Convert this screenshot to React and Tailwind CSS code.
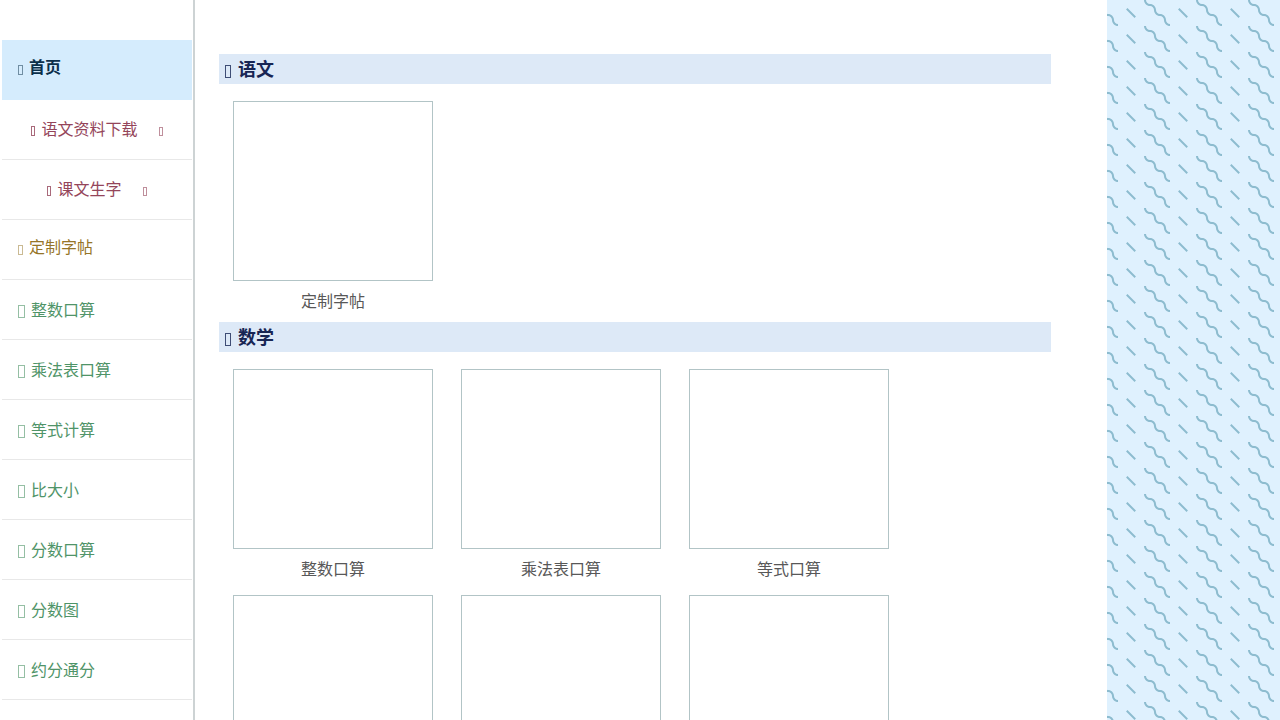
const menu = [
  { label: '首页', kind: 'active' },
  { label: '语文资料下载', kind: 'group' },
  { label: '课文生字', kind: 'group' },
  { label: '定制字帖', kind: 'gold' },
  { label: '整数口算' },
  { label: '乘法表口算' },
  { label: '等式计算' },
  { label: '比大小' },
  { label: '分数口算' },
  { label: '分数图' },
  { label: '约分通分' },
];

const sections = [
  { title: '语文', items: ['定制字帖'] },
  { title: '数学', items: ['整数口算', '乘法表口算', '等式口算', '比大小', '分数口算', '分数图'] },
];

// narrow outlined box used as the icon everywhere
const Icon = ({ className }) => (
  <span aria-hidden="true" className={`inline-block shrink-0 border border-current ${className}`} />
);

function MenuItem({ label, kind }) {
  if (kind === 'group') {
    return (
      <li className="h-[60px] border-b border-[#e8e8e8]">
        <button type="button" className="flex h-full w-full items-center justify-center text-[#94455a]">
          <Icon className="mt-[3px] mr-[6px] h-[10px] w-[4px] opacity-80" />
          <span>{label}</span>
          <Icon className="mt-[3px] ml-[21px] h-[9px] w-[4px] opacity-60" />
        </button>
      </li>
    );
  }

  if (kind === 'active' || kind === 'gold') {
    return (
      <li
        className={
          kind === 'active'
            ? 'h-[60px] border-b border-[#d5ecfd] bg-[#d5ecfd] font-bold text-[#0b2f4a]'
            : 'h-[60px] border-b border-[#e8e8e8] text-[#967528]'
        }
      >
        <a href="#" className="flex h-full items-center px-4 pb-[3px]">
          <Icon className="mt-1 mr-[6px] h-[10px] w-[5px] opacity-50" />
          <span>{label}</span>
        </a>
      </li>
    );
  }

  return (
    <li className="h-[60px] border-b border-[#e8e8e8] text-[#4f9468]">
      <a href="#" className="flex h-full items-center px-4 pt-[3px]">
        <Icon className="mr-[6px] h-[13px] w-[7px] opacity-60" />
        <span>{label}</span>
      </a>
    </li>
  );
}

function Section({ title, items }) {
  return (
    <section>
      <h2 className="flex h-[30px] items-center bg-[#dde9f7] px-[6px] pt-0.5 text-[18px] font-bold text-[#172554]">
        <Icon className="mt-0.5 mr-[7px] h-[13px] w-[6px] opacity-80" />
        {title}
      </h2>
      <div className="flex flex-wrap gap-x-7 gap-y-[5px] px-[14px] pt-[17px]">
        {items.map((item) => (
          <a key={item} href="#" className="block w-[200px] text-center text-[#585858]">
            <div className="h-[180px] border border-[#b2c4c6]" />
            <p className="h-[41px] leading-[41px]">{item}</p>
          </a>
        ))}
      </div>
    </section>
  );
}

function Wiggle() {
  return (
    <svg className="absolute inset-0 h-full w-full" aria-hidden="true">
      <defs>
        <pattern id="wiggle" x="37" y="0" width="52" height="26" patternUnits="userSpaceOnUse">
          <path
            fill="#8dbccf"
            d="M10 10c0-2.21-1.79-4-4-4-3.314 0-6-2.686-6-6h2c0 2.21 1.79 4 4 4 3.314 0 6 2.686 6 6 0 2.21 1.79 4 4 4 3.314 0 6 2.686 6 6 0 2.21 1.79 4 4 4v2c-3.314 0-6-2.686-6-6 0-2.21-1.79-4-4-4-3.314 0-6-2.686-6-6zm25.464-1.95l8.486 8.486-1.414 1.414-8.486-8.486 1.414-1.414z"
          />
        </pattern>
      </defs>
      <rect width="100%" height="100%" fill="url(#wiggle)" />
    </svg>
  );
}

export default function App() {
  return (
    <div className="flex min-h-screen bg-white font-['Liberation_Sans','Noto_Sans_CJK_SC',sans-serif] text-[16px]">
      <nav className="w-[195px] shrink-0 border-r-2 border-[#cdd3d4] pt-10 pr-px pl-[2px]">
        <ul>
          {menu.map((item) => (
            <MenuItem key={item.label} {...item} />
          ))}
        </ul>
      </nav>

      <main className="min-w-0 flex-1 pt-[54px] pr-14 pl-6">
        {sections.map((section) => (
          <Section key={section.title} {...section} />
        ))}
      </main>

      <aside className="relative w-[173px] shrink-0 bg-[#dff1fe]">
        <Wiggle />
      </aside>
    </div>
  );
}
